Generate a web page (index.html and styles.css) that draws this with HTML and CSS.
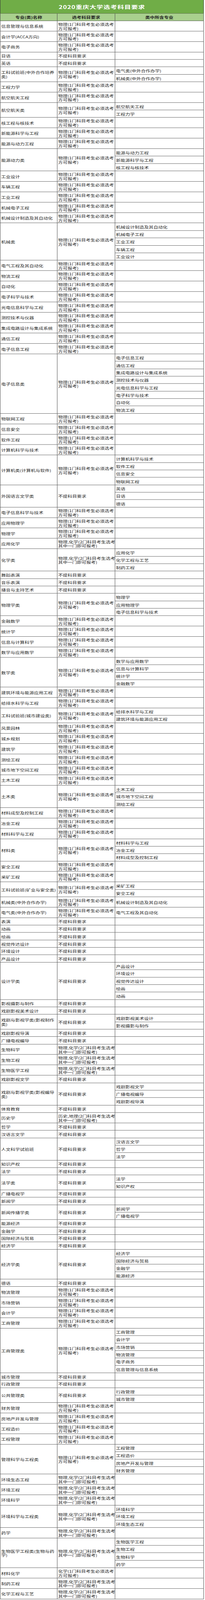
FILE: index.html
```html
<!DOCTYPE html>
<html lang="zh-CN">
<head>
<meta charset="utf-8">
<title>2020重庆大学选考科目要求</title>
<link rel="stylesheet" href="styles.css">
</head>
<body>
<div class="fit">
<div class="sheet">
<div class="title"><span>2020重庆大学选考科目要求</span></div>
<div class="row head"><div class="c c1"><span>专业(类)名称</span></div><div class="c c2"><span>选考科目要求</span></div><div class="c c3"><span>类中所含专业</span></div></div>

<div class="row t"><div class="c c1"><span>信息管理与信息系统</span></div><div class="c c2"><span>物理(1门科目考生必须选考<br>方可报考)</span></div><div class="c c3"></div></div>
<div class="row t"><div class="c c1"><span>会计学(ACCA方向)</span></div><div class="c c2"><span>物理(1门科目考生必须选考<br>方可报考)</span></div><div class="c c3"></div></div>
<div class="row t"><div class="c c1"><span>电子商务</span></div><div class="c c2"><span>物理(1门科目考生必须选考<br>方可报考)</span></div><div class="c c3"></div></div>
<div class="row s"><div class="c c1"><span>日语</span></div><div class="c c2"><span>不提科目要求</span></div><div class="c c3"></div></div>
<div class="row s"><div class="c c1"><span>英语</span></div><div class="c c2"><span>不提科目要求</span></div><div class="c c3"></div></div>
<div class="row g"><div class="c c1"><span>工科试验班(中外合作培养<br>类)</span></div><div class="c c2"><span>物理(1门科目考生必须选考<br>方可报考)</span></div><div class="c c3 list"><div class="sub"><span>电气类(中外合作办学)</span></div><div class="sub"><span>机械类(中外合作办学)</span></div></div></div>
<div class="row t"><div class="c c1"><span>工程力学</span></div><div class="c c2"><span>物理(1门科目考生必须选考<br>方可报考)</span></div><div class="c c3"></div></div>
<div class="row t"><div class="c c1"><span>航空航天工程</span></div><div class="c c2"><span>物理(1门科目考生必须选考<br>方可报考)</span></div><div class="c c3"></div></div>
<div class="row g"><div class="c c1"><span>航空航天类</span></div><div class="c c2"><span>物理(1门科目考生必须选考<br>方可报考)</span></div><div class="c c3 list"><div class="sub"><span>航空航天工程</span></div><div class="sub"><span>工程力学</span></div></div></div>
<div class="row t"><div class="c c1"><span>核工程与核技术</span></div><div class="c c2"><span>物理(1门科目考生必须选考<br>方可报考)</span></div><div class="c c3"></div></div>
<div class="row t"><div class="c c1"><span>新能源科学与工程</span></div><div class="c c2"><span>物理(1门科目考生必须选考<br>方可报考)</span></div><div class="c c3"></div></div>
<div class="row t"><div class="c c1"><span>能源与动力工程</span></div><div class="c c2"><span>物理(1门科目考生必须选考<br>方可报考)</span></div><div class="c c3"></div></div>
<div class="row g"><div class="c c1"><span>能源动力类</span></div><div class="c c2"><span>物理(1门科目考生必须选考<br>方可报考)</span></div><div class="c c3 list"><div class="sub"><span>能源与动力工程</span></div><div class="sub"><span>新能源科学与工程</span></div><div class="sub"><span>核工程与核技术</span></div></div></div>
<div class="row t"><div class="c c1"><span>工业设计</span></div><div class="c c2"><span>物理(1门科目考生必须选考<br>方可报考)</span></div><div class="c c3"></div></div>
<div class="row t"><div class="c c1"><span>车辆工程</span></div><div class="c c2"><span>物理(1门科目考生必须选考<br>方可报考)</span></div><div class="c c3"></div></div>
<div class="row t"><div class="c c1"><span>工业工程</span></div><div class="c c2"><span>物理(1门科目考生必须选考<br>方可报考)</span></div><div class="c c3"></div></div>
<div class="row t"><div class="c c1"><span>机械电子工程</span></div><div class="c c2"><span>物理(1门科目考生必须选考<br>方可报考)</span></div><div class="c c3"></div></div>
<div class="row t"><div class="c c1"><span>机械设计制造及其自动化</span></div><div class="c c2"><span>物理(1门科目考生必须选考<br>方可报考)</span></div><div class="c c3"></div></div>
<div class="row g"><div class="c c1"><span>机械类</span></div><div class="c c2"><span>物理(1门科目考生必须选考<br>方可报考)</span></div><div class="c c3 list"><div class="sub"><span>机械设计制造及其自动化</span></div><div class="sub"><span>机械电子工程</span></div><div class="sub"><span>工业工程</span></div><div class="sub"><span>车辆工程</span></div><div class="sub"><span>工业设计</span></div></div></div>
<div class="row t"><div class="c c1"><span>电气工程及其自动化</span></div><div class="c c2"><span>物理(1门科目考生必须选考<br>方可报考)</span></div><div class="c c3"></div></div>
<div class="row t"><div class="c c1"><span>物流工程</span></div><div class="c c2"><span>物理(1门科目考生必须选考<br>方可报考)</span></div><div class="c c3"></div></div>
<div class="row t"><div class="c c1"><span>自动化</span></div><div class="c c2"><span>物理(1门科目考生必须选考<br>方可报考)</span></div><div class="c c3"></div></div>
<div class="row t"><div class="c c1"><span>电子科学与技术</span></div><div class="c c2"><span>物理(1门科目考生必须选考<br>方可报考)</span></div><div class="c c3"></div></div>
<div class="row t"><div class="c c1"><span>光电信息科学与工程</span></div><div class="c c2"><span>物理(1门科目考生必须选考<br>方可报考)</span></div><div class="c c3"></div></div>
<div class="row t"><div class="c c1"><span>测控技术与仪器</span></div><div class="c c2"><span>物理(1门科目考生必须选考<br>方可报考)</span></div><div class="c c3"></div></div>
<div class="row t"><div class="c c1"><span>集成电路设计与集成系统</span></div><div class="c c2"><span>物理(1门科目考生必须选考<br>方可报考)</span></div><div class="c c3"></div></div>
<div class="row t"><div class="c c1"><span>通信工程</span></div><div class="c c2"><span>物理(1门科目考生必须选考<br>方可报考)</span></div><div class="c c3"></div></div>
<div class="row t"><div class="c c1"><span>电子信息工程</span></div><div class="c c2"><span>物理(1门科目考生必须选考<br>方可报考)</span></div><div class="c c3"></div></div>
<div class="row g"><div class="c c1"><span>电子信息类</span></div><div class="c c2"><span>物理(1门科目考生必须选考<br>方可报考)</span></div><div class="c c3 list"><div class="sub"><span>电子信息工程</span></div><div class="sub"><span>通信工程</span></div><div class="sub"><span>集成电路设计与集成系统</span></div><div class="sub"><span>测控技术与仪器</span></div><div class="sub"><span>光电信息科学与工程</span></div><div class="sub"><span>电子科学与技术</span></div><div class="sub"><span>自动化</span></div><div class="sub"><span>物流工程</span></div></div></div>
<div class="row t"><div class="c c1"><span>物联网工程</span></div><div class="c c2"><span>物理(1门科目考生必须选考<br>方可报考)</span></div><div class="c c3"></div></div>
<div class="row t"><div class="c c1"><span>信息安全</span></div><div class="c c2"><span>物理(1门科目考生必须选考<br>方可报考)</span></div><div class="c c3"></div></div>
<div class="row t"><div class="c c1"><span>软件工程</span></div><div class="c c2"><span>物理(1门科目考生必须选考<br>方可报考)</span></div><div class="c c3"></div></div>
<div class="row t"><div class="c c1"><span>计算机科学与技术</span></div><div class="c c2"><span>物理(1门科目考生必须选考<br>方可报考)</span></div><div class="c c3"></div></div>
<div class="row g"><div class="c c1"><span>计算机类(计算机与软件)</span></div><div class="c c2"><span>物理(1门科目考生必须选考<br>方可报考)</span></div><div class="c c3 list"><div class="sub"><span>计算机科学与技术</span></div><div class="sub"><span>软件工程</span></div><div class="sub"><span>信息安全</span></div><div class="sub"><span>物联网工程</span></div></div></div>
<div class="row g"><div class="c c1"><span>外国语言文学类</span></div><div class="c c2"><span>不提科目要求</span></div><div class="c c3 list"><div class="sub"><span>英语</span></div><div class="sub"><span>日语</span></div><div class="sub"><span>德语</span></div></div></div>
<div class="row t"><div class="c c1"><span>电子信息科学与技术</span></div><div class="c c2"><span>物理(1门科目考生必须选考<br>方可报考)</span></div><div class="c c3"></div></div>
<div class="row t"><div class="c c1"><span>应用物理学</span></div><div class="c c2"><span>物理(1门科目考生必须选考<br>方可报考)</span></div><div class="c c3"></div></div>
<div class="row t"><div class="c c1"><span>物理学</span></div><div class="c c2"><span>物理(1门科目考生必须选考<br>方可报考)</span></div><div class="c c3"></div></div>
<div class="row t"><div class="c c1"><span>应用化学</span></div><div class="c c2"><span>物理,化学(2门科目考生选考<br>其中一门即可报考)</span></div><div class="c c3"></div></div>
<div class="row g"><div class="c c1"><span>化学类</span></div><div class="c c2"><span>物理,化学(2门科目考生选考<br>其中一门即可报考)</span></div><div class="c c3 list"><div class="sub"><span>应用化学</span></div><div class="sub"><span>化学工程与工艺</span></div><div class="sub"><span>制药工程</span></div></div></div>
<div class="row s"><div class="c c1"><span>舞蹈表演</span></div><div class="c c2"><span>不提科目要求</span></div><div class="c c3"></div></div>
<div class="row s"><div class="c c1"><span>音乐表演</span></div><div class="c c2"><span>不提科目要求</span></div><div class="c c3"></div></div>
<div class="row s"><div class="c c1"><span>播音与主持艺术</span></div><div class="c c2"><span>不提科目要求</span></div><div class="c c3"></div></div>
<div class="row g"><div class="c c1"><span>物理学类</span></div><div class="c c2"><span>物理(1门科目考生必须选考<br>方可报考)</span></div><div class="c c3 list"><div class="sub"><span>物理学</span></div><div class="sub"><span>应用物理学</span></div><div class="sub"><span>电子信息科学与技术</span></div></div></div>
<div class="row t"><div class="c c1"><span>金融数学</span></div><div class="c c2"><span>物理(1门科目考生必须选考<br>方可报考)</span></div><div class="c c3"></div></div>
<div class="row t"><div class="c c1"><span>统计学</span></div><div class="c c2"><span>物理(1门科目考生必须选考<br>方可报考)</span></div><div class="c c3"></div></div>
<div class="row t"><div class="c c1"><span>信息与计算科学</span></div><div class="c c2"><span>物理(1门科目考生必须选考<br>方可报考)</span></div><div class="c c3"></div></div>
<div class="row t"><div class="c c1"><span>数学与应用数学</span></div><div class="c c2"><span>物理(1门科目考生必须选考<br>方可报考)</span></div><div class="c c3"></div></div>
<div class="row g"><div class="c c1"><span>数学类</span></div><div class="c c2"><span>物理(1门科目考生必须选考<br>方可报考)</span></div><div class="c c3 list"><div class="sub"><span>数学与应用数学</span></div><div class="sub"><span>信息与计算科学</span></div><div class="sub"><span>统计学</span></div><div class="sub"><span>金融数学</span></div></div></div>
<div class="row t"><div class="c c1"><span>建筑环境与能源应用工程</span></div><div class="c c2"><span>物理(1门科目考生必须选考<br>方可报考)</span></div><div class="c c3"></div></div>
<div class="row t"><div class="c c1"><span>给排水科学与工程</span></div><div class="c c2"><span>物理(1门科目考生必须选考<br>方可报考)</span></div><div class="c c3"></div></div>
<div class="row g"><div class="c c1"><span>工科试验班(城市建设类)</span></div><div class="c c2"><span>物理(1门科目考生必须选考<br>方可报考)</span></div><div class="c c3 list"><div class="sub"><span>给排水科学与工程</span></div><div class="sub"><span>建筑环境与能源应用工程</span></div></div></div>
<div class="row t"><div class="c c1"><span>风景园林</span></div><div class="c c2"><span>物理(1门科目考生必须选考<br>方可报考)</span></div><div class="c c3"></div></div>
<div class="row t"><div class="c c1"><span>城乡规划</span></div><div class="c c2"><span>物理(1门科目考生必须选考<br>方可报考)</span></div><div class="c c3"></div></div>
<div class="row t"><div class="c c1"><span>建筑学</span></div><div class="c c2"><span>物理(1门科目考生必须选考<br>方可报考)</span></div><div class="c c3"></div></div>
<div class="row t"><div class="c c1"><span>测绘工程</span></div><div class="c c2"><span>物理(1门科目考生必须选考<br>方可报考)</span></div><div class="c c3"></div></div>
<div class="row t"><div class="c c1"><span>城市地下空间工程</span></div><div class="c c2"><span>物理(1门科目考生必须选考<br>方可报考)</span></div><div class="c c3"></div></div>
<div class="row t"><div class="c c1"><span>土木工程</span></div><div class="c c2"><span>物理(1门科目考生必须选考<br>方可报考)</span></div><div class="c c3"></div></div>
<div class="row g"><div class="c c1"><span>土木类</span></div><div class="c c2"><span>物理(1门科目考生必须选考<br>方可报考)</span></div><div class="c c3 list"><div class="sub"><span>土木工程</span></div><div class="sub"><span>城市地下空间工程</span></div><div class="sub"><span>测绘工程</span></div></div></div>
<div class="row t"><div class="c c1"><span>材料成型及控制工程</span></div><div class="c c2"><span>物理(1门科目考生必须选考<br>方可报考)</span></div><div class="c c3"></div></div>
<div class="row t"><div class="c c1"><span>冶金工程</span></div><div class="c c2"><span>物理(1门科目考生必须选考<br>方可报考)</span></div><div class="c c3"></div></div>
<div class="row t"><div class="c c1"><span>材料科学与工程</span></div><div class="c c2"><span>物理(1门科目考生必须选考<br>方可报考)</span></div><div class="c c3"></div></div>
<div class="row g"><div class="c c1"><span>材料类</span></div><div class="c c2"><span>物理(1门科目考生必须选考<br>方可报考)</span></div><div class="c c3 list"><div class="sub"><span>材料科学与工程</span></div><div class="sub"><span>冶金工程</span></div><div class="sub"><span>材料成型及控制工程</span></div></div></div>
<div class="row t"><div class="c c1"><span>安全工程</span></div><div class="c c2"><span>物理(1门科目考生必须选考<br>方可报考)</span></div><div class="c c3"></div></div>
<div class="row t"><div class="c c1"><span>采矿工程</span></div><div class="c c2"><span>物理(1门科目考生必须选考<br>方可报考)</span></div><div class="c c3"></div></div>
<div class="row g"><div class="c c1"><span>工科试验班(矿业与安全类)</span></div><div class="c c2"><span>物理(1门科目考生必须选考<br>方可报考)</span></div><div class="c c3 list"><div class="sub"><span>采矿工程</span></div><div class="sub"><span>安全工程</span></div></div></div>
<div class="row t"><div class="c c1"><span>机械类(中外合作办学)</span></div><div class="c c2"><span>物理(1门科目考生必须选考<br>方可报考)</span></div><div class="c c3"><span>机械设计制造及其自动化</span></div></div>
<div class="row t"><div class="c c1"><span>电气类(中外合作办学)</span></div><div class="c c2"><span>物理(1门科目考生必须选考<br>方可报考)</span></div><div class="c c3"><span>电气工程及其自动化</span></div></div>
<div class="row s"><div class="c c1"><span>表演</span></div><div class="c c2"><span>不提科目要求</span></div><div class="c c3"></div></div>
<div class="row s"><div class="c c1"><span>动画</span></div><div class="c c2"><span>不提科目要求</span></div><div class="c c3"></div></div>
<div class="row s"><div class="c c1"><span>绘画</span></div><div class="c c2"><span>不提科目要求</span></div><div class="c c3"></div></div>
<div class="row s"><div class="c c1"><span>视觉传达设计</span></div><div class="c c2"><span>不提科目要求</span></div><div class="c c3"></div></div>
<div class="row s"><div class="c c1"><span>环境设计</span></div><div class="c c2"><span>不提科目要求</span></div><div class="c c3"></div></div>
<div class="row s"><div class="c c1"><span>产品设计</span></div><div class="c c2"><span>不提科目要求</span></div><div class="c c3"></div></div>
<div class="row g"><div class="c c1"><span>设计学类</span></div><div class="c c2"><span>不提科目要求</span></div><div class="c c3 list"><div class="sub"><span>产品设计</span></div><div class="sub"><span>环境设计</span></div><div class="sub"><span>视觉传达设计</span></div><div class="sub"><span>绘画</span></div><div class="sub"><span>动画</span></div></div></div>
<div class="row s"><div class="c c1"><span>影视摄影与制作</span></div><div class="c c2"><span>不提科目要求</span></div><div class="c c3"></div></div>
<div class="row s"><div class="c c1"><span>戏剧影视美术设计</span></div><div class="c c2"><span>不提科目要求</span></div><div class="c c3"></div></div>
<div class="row g"><div class="c c1"><span>戏剧与影视学类(影视制作<br>类)</span></div><div class="c c2"><span>不提科目要求</span></div><div class="c c3 list"><div class="sub"><span>戏剧影视美术设计</span></div><div class="sub"><span>影视摄影与制作</span></div></div></div>
<div class="row s"><div class="c c1"><span>戏剧影视导演</span></div><div class="c c2"><span>不提科目要求</span></div><div class="c c3"></div></div>
<div class="row s"><div class="c c1"><span>广播电视编导</span></div><div class="c c2"><span>不提科目要求</span></div><div class="c c3"></div></div>
<div class="row t"><div class="c c1"><span>生物科学</span></div><div class="c c2"><span>物理,化学(2门科目考生选考<br>其中一门即可报考)</span></div><div class="c c3"></div></div>
<div class="row t"><div class="c c1"><span>生物工程</span></div><div class="c c2"><span>物理,化学(2门科目考生选考<br>其中一门即可报考)</span></div><div class="c c3"></div></div>
<div class="row t"><div class="c c1"><span>生物医学工程</span></div><div class="c c2"><span>物理,化学(2门科目考生选考<br>其中一门即可报考)</span></div><div class="c c3"></div></div>
<div class="row s"><div class="c c1"><span>戏剧影视文学</span></div><div class="c c2"><span>不提科目要求</span></div><div class="c c3"></div></div>
<div class="row g"><div class="c c1"><span>戏剧与影视学类(影视编导<br>类)</span></div><div class="c c2"><span>不提科目要求</span></div><div class="c c3 list"><div class="sub"><span>戏剧影视文学</span></div><div class="sub"><span>广播电视编导</span></div><div class="sub"><span>戏剧影视导演</span></div></div></div>
<div class="row s"><div class="c c1"><span>体育教育</span></div><div class="c c2"><span>不提科目要求</span></div><div class="c c3"></div></div>
<div class="row t"><div class="c c1"><span>历史学</span></div><div class="c c2"><span>历史,地理(2门科目考生选考<br>其中一门即可报考)</span></div><div class="c c3"></div></div>
<div class="row s"><div class="c c1"><span>哲学</span></div><div class="c c2"><span>不提科目要求</span></div><div class="c c3"></div></div>
<div class="row s"><div class="c c1"><span>汉语言文学</span></div><div class="c c2"><span>不提科目要求</span></div><div class="c c3"></div></div>
<div class="row g"><div class="c c1"><span>人文科学试验班</span></div><div class="c c2"><span>不提科目要求</span></div><div class="c c3 list"><div class="sub"><span>汉语言文学</span></div><div class="sub"><span>哲学</span></div><div class="sub"><span>法学</span></div></div></div>
<div class="row s"><div class="c c1"><span>知识产权</span></div><div class="c c2"><span>不提科目要求</span></div><div class="c c3"></div></div>
<div class="row s"><div class="c c1"><span>法学</span></div><div class="c c2"><span>不提科目要求</span></div><div class="c c3"></div></div>
<div class="row g"><div class="c c1"><span>法学类</span></div><div class="c c2"><span>不提科目要求</span></div><div class="c c3 list"><div class="sub"><span>法学</span></div><div class="sub"><span>知识产权</span></div></div></div>
<div class="row s"><div class="c c1"><span>广播电视学</span></div><div class="c c2"><span>不提科目要求</span></div><div class="c c3"></div></div>
<div class="row s"><div class="c c1"><span>新闻学</span></div><div class="c c2"><span>不提科目要求</span></div><div class="c c3"></div></div>
<div class="row g"><div class="c c1"><span>新闻传播学类</span></div><div class="c c2"><span>不提科目要求</span></div><div class="c c3 list"><div class="sub"><span>新闻学</span></div><div class="sub"><span>广播电视学</span></div></div></div>
<div class="row s"><div class="c c1"><span>能源经济</span></div><div class="c c2"><span>不提科目要求</span></div><div class="c c3"></div></div>
<div class="row s"><div class="c c1"><span>金融学</span></div><div class="c c2"><span>不提科目要求</span></div><div class="c c3"></div></div>
<div class="row s"><div class="c c1"><span>国际经济与贸易</span></div><div class="c c2"><span>不提科目要求</span></div><div class="c c3"></div></div>
<div class="row s"><div class="c c1"><span>经济学</span></div><div class="c c2"><span>不提科目要求</span></div><div class="c c3"></div></div>
<div class="row g"><div class="c c1"><span>经济学类</span></div><div class="c c2"><span>不提科目要求</span></div><div class="c c3 list"><div class="sub"><span>经济学</span></div><div class="sub"><span>国际经济与贸易</span></div><div class="sub"><span>金融学</span></div><div class="sub"><span>能源经济</span></div></div></div>
<div class="row s"><div class="c c1"><span>德语</span></div><div class="c c2"><span>不提科目要求</span></div><div class="c c3"></div></div>
<div class="row t"><div class="c c1"><span>物流管理</span></div><div class="c c2"><span>物理(1门科目考生必须选考<br>方可报考)</span></div><div class="c c3"></div></div>
<div class="row t"><div class="c c1"><span>市场营销</span></div><div class="c c2"><span>物理(1门科目考生必须选考<br>方可报考)</span></div><div class="c c3"></div></div>
<div class="row t"><div class="c c1"><span>会计学</span></div><div class="c c2"><span>物理(1门科目考生必须选考<br>方可报考)</span></div><div class="c c3"></div></div>
<div class="row t"><div class="c c1"><span>工商管理</span></div><div class="c c2"><span>物理(1门科目考生必须选考<br>方可报考)</span></div><div class="c c3"></div></div>
<div class="row g"><div class="c c1"><span>工商管理类</span></div><div class="c c2"><span>物理(1门科目考生必须选考<br>方可报考)</span></div><div class="c c3 list"><div class="sub"><span>工商管理</span></div><div class="sub"><span>会计学</span></div><div class="sub"><span>市场营销</span></div><div class="sub"><span>物流管理</span></div><div class="sub"><span>电子商务</span></div><div class="sub"><span>信息管理与信息系统</span></div></div></div>
<div class="row s"><div class="c c1"><span>城市管理</span></div><div class="c c2"><span>不提科目要求</span></div><div class="c c3"></div></div>
<div class="row s"><div class="c c1"><span>行政管理</span></div><div class="c c2"><span>不提科目要求</span></div><div class="c c3"></div></div>
<div class="row g"><div class="c c1"><span>公共管理类</span></div><div class="c c2"><span>不提科目要求</span></div><div class="c c3 list"><div class="sub"><span>行政管理</span></div><div class="sub"><span>城市管理</span></div></div></div>
<div class="row t"><div class="c c1"><span>财务管理</span></div><div class="c c2"><span>物理(1门科目考生必须选考<br>方可报考)</span></div><div class="c c3"></div></div>
<div class="row t"><div class="c c1"><span>房地产开发与管理</span></div><div class="c c2"><span>物理(1门科目考生必须选考<br>方可报考)</span></div><div class="c c3"></div></div>
<div class="row t"><div class="c c1"><span>工程造价</span></div><div class="c c2"><span>物理(1门科目考生必须选考<br>方可报考)</span></div><div class="c c3"></div></div>
<div class="row t"><div class="c c1"><span>工程管理</span></div><div class="c c2"><span>物理(1门科目考生必须选考<br>方可报考)</span></div><div class="c c3"></div></div>
<div class="row g"><div class="c c1"><span>管理科学与工程类</span></div><div class="c c2"><span>物理(1门科目考生必须选考<br>方可报考)</span></div><div class="c c3 list"><div class="sub"><span>工程管理</span></div><div class="sub"><span>工程造价</span></div><div class="sub"><span>房地产开发与管理</span></div><div class="sub"><span>财务管理</span></div></div></div>
<div class="row t"><div class="c c1"><span>环境生态工程</span></div><div class="c c2"><span>物理,化学(2门科目考生选考<br>其中一门即可报考)</span></div><div class="c c3"></div></div>
<div class="row t"><div class="c c1"><span>环境工程</span></div><div class="c c2"><span>物理,化学(2门科目考生选考<br>其中一门即可报考)</span></div><div class="c c3"></div></div>
<div class="row t"><div class="c c1"><span>环境科学</span></div><div class="c c2"><span>物理,化学(2门科目考生选考<br>其中一门即可报考)</span></div><div class="c c3"></div></div>
<div class="row g"><div class="c c1"><span>环境科学与工程类</span></div><div class="c c2"><span>物理,化学(2门科目考生选考<br>其中一门即可报考)</span></div><div class="c c3 list"><div class="sub"><span>环境科学</span></div><div class="sub"><span>环境工程</span></div><div class="sub"><span>环境生态工程</span></div></div></div>
<div class="row t"><div class="c c1"><span>药学</span></div><div class="c c2"><span>物理,化学(2门科目考生选考<br>其中一门即可报考)</span></div><div class="c c3"></div></div>
<div class="row g"><div class="c c1"><span>生物医学工程类(生物与药<br>学)</span></div><div class="c c2"><span>物理,化学(2门科目考生选考<br>其中一门即可报考)</span></div><div class="c c3 list"><div class="sub"><span>生物医学工程</span></div><div class="sub"><span>生物工程</span></div><div class="sub"><span>生物科学</span></div><div class="sub"><span>药学</span></div></div></div>
<div class="row t"><div class="c c1"><span>材料化学</span></div><div class="c c2"><span>化学(1门科目考生必须选考<br>方可报考)</span></div><div class="c c3"></div></div>
<div class="row t"><div class="c c1"><span>制药工程</span></div><div class="c c2"><span>物理,化学(2门科目考生选考<br>其中一门即可报考)</span></div><div class="c c3"></div></div>
<div class="row t"><div class="c c1"><span>化学工程与工艺</span></div><div class="c c2"><span>物理,化学(2门科目考生选考<br>其中一门即可报考)</span></div><div class="c c3"></div></div>
</div>
</div>
</body>
</html>
```
FILE: styles.css
```css
* {
  box-sizing: border-box;
}

html, body {
  margin: 0;
  padding: 0;
  background: #ffffff;
}

body {
  font-family: "Noto Sans CJK SC", "Noto Sans", sans-serif;
  font-size: 12px;
  line-height: 15px;
  color: #1e1e1e;
}

.fit {
  height: 4096px;
  overflow: hidden;
}

.sheet {
  width: 522px;
  display: flex;
  flex-direction: column;
  transform: scaleY(0.72278);
  transform-origin: 0 0;
}

.title {
  flex: none;
  height: 48px;
  background: #70ad47;
  color: #ffffff;
  font-weight: 700;
  font-size: 17px;
  line-height: 20px;
  letter-spacing: 0.8px;
  display: flex;
  align-items: center;
  justify-content: center;
  border-left: 1px solid #3a3a3a;
  border-right: 1px solid #3a3a3a;
  border-bottom: 1px solid #2a2a2a;
  padding-top: 2px;
}

.row {
  flex: none;
  display: grid;
  grid-template-columns: 147px 148px 227px;
}

.row.s {
  height: 26.35px;
}

.row.t {
  height: 36.89px;
}

.row.head {
  height: 26px;
}

.c {
  display: flex;
  align-items: center;
  min-height: 0;
  padding: 2px 2px 0 2px;
  white-space: nowrap;
  border-right: 1px solid #4a4a4a;
  border-bottom: 1px solid #2a2a2a;
}

.c1 {
  border-left: 1px solid #4a4a4a;
}

.head .c {
  background: #a9d08e;
  font-weight: 700;
  justify-content: center;
  padding: 2px 0 0 0;
}

.c3.list {
  display: flex;
  flex-direction: column;
  align-items: stretch;
  padding: 0;
  border-bottom: none;
}

.sub {
  flex: none;
  height: 26.35px;
  display: flex;
  align-items: center;
  padding: 2px 2px 0 2px;
  border-bottom: 1px solid #2a2a2a;
  white-space: nowrap;
}
```
